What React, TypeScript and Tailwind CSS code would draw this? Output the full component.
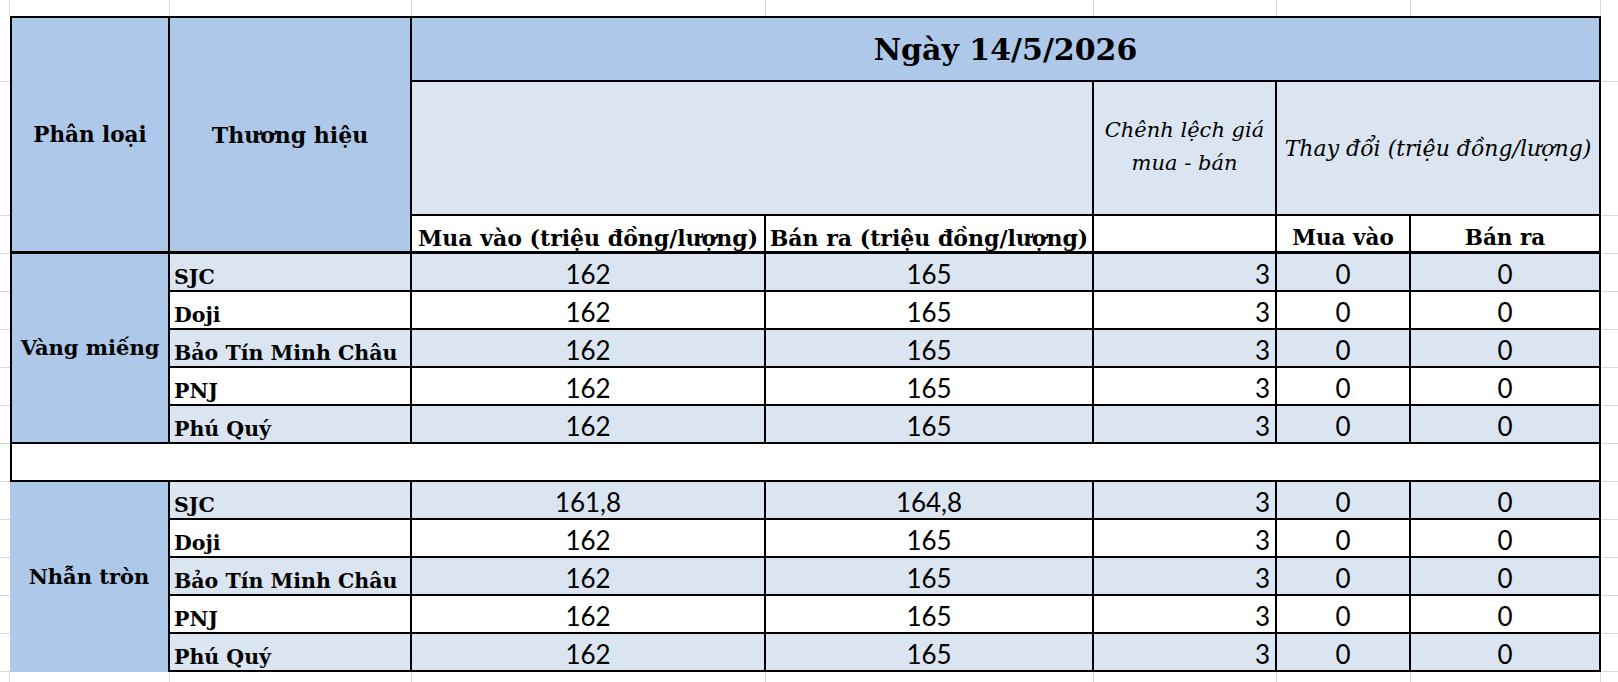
import React from "react";

interface PriceRow {
  brand: string;
  buy: string;
  sell: string;
  spread: string;
  buyChange: string;
  sellChange: string;
}

const vangMieng: PriceRow[] = [
  { brand: "SJC", buy: "162", sell: "165", spread: "3", buyChange: "0", sellChange: "0" },
  { brand: "Doji", buy: "162", sell: "165", spread: "3", buyChange: "0", sellChange: "0" },
  { brand: "Bảo Tín Minh Châu", buy: "162", sell: "165", spread: "3", buyChange: "0", sellChange: "0" },
  { brand: "PNJ", buy: "162", sell: "165", spread: "3", buyChange: "0", sellChange: "0" },
  { brand: "Phú Quý", buy: "162", sell: "165", spread: "3", buyChange: "0", sellChange: "0" },
];

const nhanTron: PriceRow[] = [
  { brand: "SJC", buy: "161,8", sell: "164,8", spread: "3", buyChange: "0", sellChange: "0" },
  { brand: "Doji", buy: "162", sell: "165", spread: "3", buyChange: "0", sellChange: "0" },
  { brand: "Bảo Tín Minh Châu", buy: "162", sell: "165", spread: "3", buyChange: "0", sellChange: "0" },
  { brand: "PNJ", buy: "162", sell: "165", spread: "3", buyChange: "0", sellChange: "0" },
  { brand: "Phú Quý", buy: "162", sell: "165", spread: "3", buyChange: "0", sellChange: "0" },
];

const serif = "font-['DejaVu_Serif',serif] whitespace-nowrap";
const serifBold = `${serif} font-bold leading-[24px]`;
const numFont = "font-['Lato',sans-serif] text-[26px] leading-[28px]";

// spreadsheet gridlines outside the table
const gridR = "border-r border-[#d9d9d9]";
const gridB = "border-b border-[#d9d9d9]";

function Section({ label, rows, first }: { label: string; rows: PriceRow[]; first: boolean }) {
  return (
    <>
      {rows.map((r, i) => {
        const bg = i % 2 === 0 ? "bg-[#dbe5f1]" : "bg-white";
        return (
          <React.Fragment key={r.brand}>
            <div className={gridB} />
            {i === 0 && (
              <div
                className={`row-span-5 flex items-center justify-center bg-[#aec8e9] border-black border-r-2 ${
                  first ? "border-l-2 border-b-2" : ""
                } ${serifBold} text-[21px]`}
              >
                {label}
              </div>
            )}
            <div className={`flex items-end pl-[4px] pb-[1px] border-r-2 border-b-2 border-black ${bg} ${serifBold} text-[20.5px]`}>
              {r.brand}
            </div>
            <div className={`flex items-end justify-center pb-[2px] border-r-2 border-b-2 border-black ${bg} ${numFont}`}>
              {r.buy}
            </div>
            <div className={`flex items-end justify-center pb-[2px] border-r-2 border-b-2 border-black ${bg} ${numFont}`}>
              {r.sell}
            </div>
            <div className={`flex items-end justify-end pr-[5px] pb-[2px] border-r-2 border-b-2 border-black ${bg} ${numFont}`}>
              {r.spread}
            </div>
            <div className={`flex items-end justify-center pb-[2px] border-r-2 border-b-2 border-black ${bg} ${numFont}`}>
              {r.buyChange}
            </div>
            <div className={`flex items-end justify-center pb-[2px] border-r-2 border-b-2 border-black ${bg} ${numFont}`}>
              {r.sellChange}
            </div>
            <div className={gridB} />
          </React.Fragment>
        );
      })}
    </>
  );
}

export default function App() {
  return (
    <div className="w-[1618px] h-[682px] bg-white text-black overflow-hidden grid grid-cols-[10px_160px_242px_354px_328px_183px_134px_190px_17px] grid-rows-[16px_66px_134px_38px_repeat(11,38px)_10px]">
      {/* top strip */}
      <div className={gridR} />
      <div className={gridR} />
      <div className={gridR} />
      <div className={gridR} />
      <div className={gridR} />
      <div className={gridR} />
      <div className={gridR} />
      <div className={gridR} />
      <div />

      {/* header row: date */}
      <div className={gridB} />
      <div className={`row-span-3 flex items-center justify-center bg-[#aec8e9] border-black border-l-2 border-t-2 border-r-2 border-b-[3px] ${serifBold} text-[21.5px]`}>
        Phân loại
      </div>
      <div className={`row-span-3 flex items-center justify-center bg-[#aec8e9] border-black border-t-2 border-r-2 border-b-[3px] ${serifBold} text-[22px]`}>
        Thương hiệu
      </div>
      <div className={`col-span-5 flex items-center justify-center pt-[1px] bg-[#aec8e9] border-black border-t-2 border-r-2 border-b-2 ${serif} font-bold text-[30px]`}>
        Ngày 14/5/2026
      </div>
      <div className={gridB} />

      {/* header row: groups */}
      <div className={gridB} />
      <div className="col-span-2 bg-[#dbe5f1] border-black border-r-2 border-b-2" />
      <div className={`flex flex-col items-center justify-center pb-[2px] bg-[#dbe5f1] border-black border-r-2 border-b-2 ${serif} italic text-[21px] leading-[33px]`}>
        <span>Chênh lệch giá</span>
        <span>mua - bán</span>
      </div>
      <div className={`col-span-2 flex items-center justify-center bg-[#dbe5f1] border-black border-r-2 border-b-2 ${serif} italic text-[22px] leading-[33px]`}>
        Thay đổi (triệu đồng/lượng)
      </div>
      <div className={gridB} />

      {/* header row: columns */}
      <div className={gridB} />
      <div className={`flex items-end justify-center pb-[1px] bg-white border-black border-r-2 border-b-[3px] ${serifBold} text-[22px]`}>
        Mua vào (triệu đồng/lượng)
      </div>
      <div className={`flex items-end justify-center pb-[1px] bg-white border-black border-r-2 border-b-[3px] ${serifBold} text-[22px]`}>
        Bán ra (triệu đồng/lượng)
      </div>
      <div className="bg-white border-black border-r-2 border-b-[3px]" />
      <div className={`flex items-end justify-center pb-[1px] bg-white border-black border-r-2 border-b-[3px] ${serifBold} text-[21.5px]`}>
        Mua vào
      </div>
      <div className={`flex items-end justify-center pb-[1px] bg-white border-black border-r-2 border-b-[3px] ${serifBold} text-[21.5px]`}>
        Bán ra
      </div>
      <div className={gridB} />

      <Section label="Vàng miếng" rows={vangMieng} first />

      {/* empty separator row */}
      <div className={gridB} />
      <div className="col-span-7 bg-white border-black border-l-2 border-r-2 border-b-2" />
      <div className={gridB} />

      <Section label="Nhẫn tròn" rows={nhanTron} first={false} />

      {/* bottom strip */}
      <div className={gridR} />
      <div className={gridR} />
      <div className={gridR} />
      <div className={gridR} />
      <div className={gridR} />
      <div className={gridR} />
      <div className={gridR} />
      <div className={gridR} />
      <div />
    </div>
  );
}
